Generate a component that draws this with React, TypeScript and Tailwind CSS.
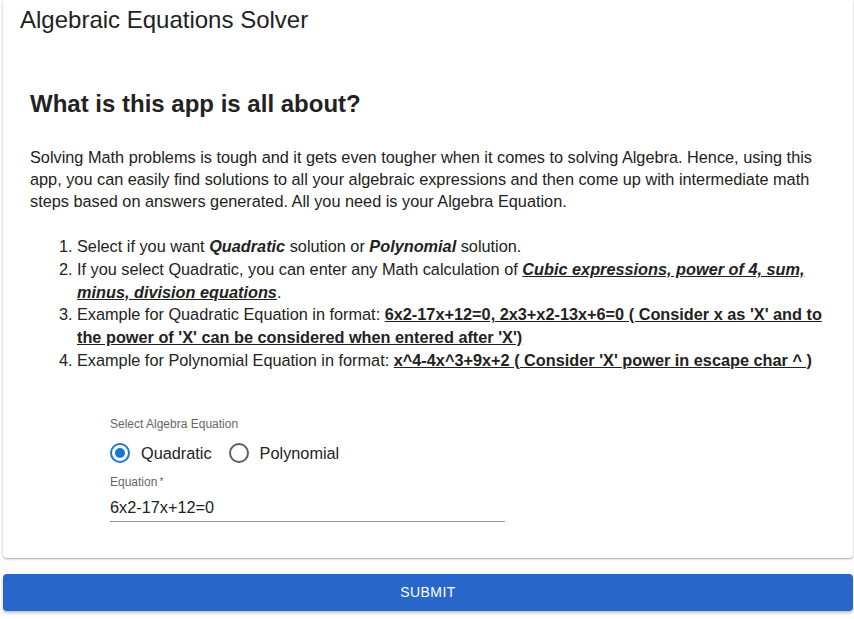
import { useState } from 'react';

function Radio({ checked, label, onClick }: { checked: boolean; label: string; onClick: () => void }) {
  return (
    <label onClick={onClick} className="flex items-center gap-[11px] cursor-pointer mr-[17px]">
      <svg width="20" height="20" viewBox="0 0 20 20">
        <circle cx="10" cy="10" r="9" fill="none" stroke={checked ? '#1976d2' : '#5f5f5f'} strokeWidth="2" />
        {checked && <circle cx="10" cy="10" r="5" fill="#1976d2" />}
      </svg>
      <span className="text-[16.3px] text-[#222]">{label}</span>
    </label>
  );
}

export default function App() {
  const [kind, setKind] = useState('quadratic');
  const [equation, setEquation] = useState('6x2-17x+12=0');

  return (
    <div className="min-h-screen bg-white pl-[3px] pr-px pb-2 font-['Liberation_Sans',Arial,sans-serif] text-[#222]">
      {/* Card */}
      <div className="bg-white rounded-b shadow-[0_1px_3px_rgba(0,0,0,0.25),0_1px_1px_rgba(0,0,0,0.12)]">
        <h1 className="pl-[17px] pt-[6px] text-[24px] leading-[28px]">Algebraic Equations Solver</h1>

        <div className="pl-[27px] pr-[22px] pt-[56px]">
          <h2 className="text-[24px] leading-[28px] font-bold">What is this app is all about?</h2>

          <p className="mt-[28px] text-[16.3px] leading-[22px]">
            Solving Math problems is tough and it gets even tougher when it comes to solving Algebra. Hence, using this
            app, you can easily find solutions to all your algebraic expressions and then come up with intermediate math
            steps based on answers generated. All you need is your Algebra Equation.
          </p>

          <ol className="mt-[23px] list-decimal pl-[47px] text-[16.3px] leading-[22.8px]">
            <li>
              Select if you want <b><i>Quadratic</i></b> solution or <b><i>Polynomial</i></b> solution.
            </li>
            <li>
              If you select Quadratic, you can enter any Math calculation of{' '}
              <b><i><u>Cubic expressions, power of 4, sum, minus, division equations</u></i></b>.
            </li>
            <li>
              Example for Quadratic Equation in format:{' '}
              <b><u>6x2-17x+12=0, 2x3+x2-13x+6=0 ( Consider x as 'X' and to the power of 'X' can be considered when entered after 'X')</u></b>
            </li>
            <li>
              Example for Polynomial Equation in format:{' '}
              <b><u>x^4-4x^3+9x+2 ( Consider 'X' power in escape char ^ )</u></b>
            </li>
          </ol>

          {/* Form */}
          <div className="pl-[80px] pt-[45px] pb-[36px]">
            <div className="text-[12px] leading-[14px] text-[#666]">Select Algebra Equation</div>
            <div className="flex items-center mt-[7px] h-[30px]">
              <Radio checked={kind === 'quadratic'} label="Quadratic" onClick={() => setKind('quadratic')} />
              <Radio checked={kind === 'polynomial'} label="Polynomial" onClick={() => setKind('polynomial')} />
            </div>
            <div className="w-[395px] mt-[7px]">
              <div className="text-[12px] leading-[14px] text-[#666]">
                Equation<span className="ml-[2px] text-[10px] align-top">*</span>
              </div>
              <input
                value={equation}
                onChange={e => setEquation(e.target.value)}
                className="w-full mt-[8px] pb-[4px] text-[16.3px] leading-[20px] text-[#222] outline-none border-b border-[#949494] bg-transparent"
              />
            </div>
          </div>
        </div>
      </div>

      {/* Submit */}
      <button className="mt-[16px] w-full h-[37px] rounded bg-[#2866c9] text-white text-[14px] tracking-[0.4px] uppercase shadow-[0_2px_3px_rgba(0,0,0,0.25)]">
        Submit
      </button>
    </div>
  );
}
